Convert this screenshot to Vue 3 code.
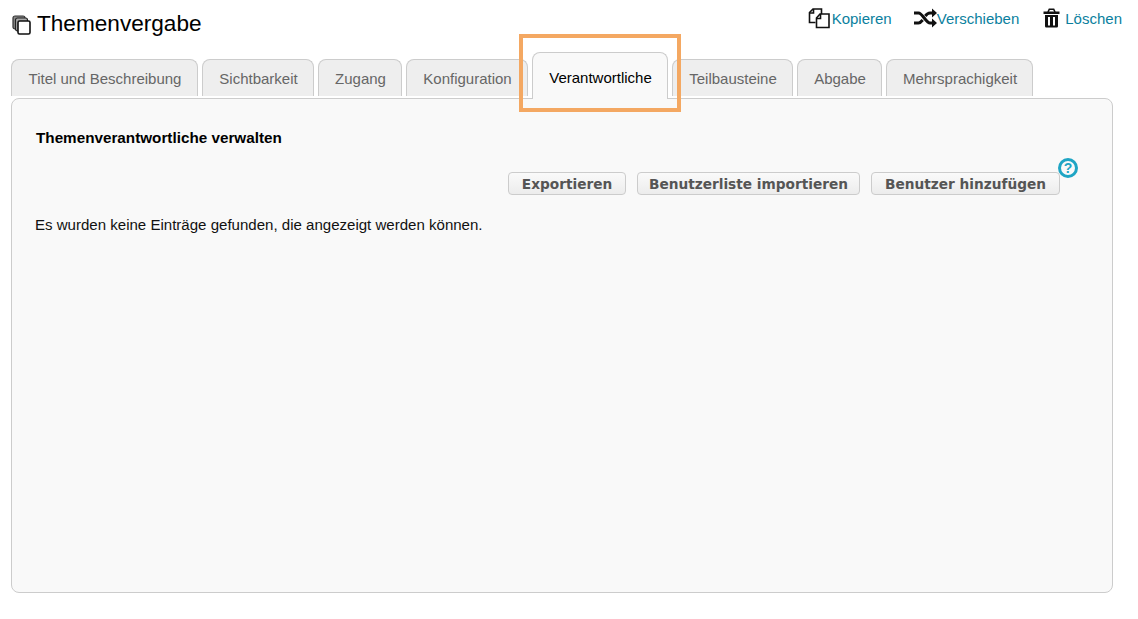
<script setup>
const tabs = [
  { label: 'Titel und Beschreibung', width: 187 },
  { label: 'Sichtbarkeit', width: 112 },
  { label: 'Zugang', width: 84 },
  { label: 'Konfiguration', width: 122 },
  { label: 'Verantwortliche', width: 136, active: true },
  { label: 'Teilbausteine', width: 121 },
  { label: 'Abgabe', width: 85 },
  { label: 'Mehrsprachigkeit', width: 147 }
]
const buttons = [
  { label: 'Exportieren', width: 118 },
  { label: 'Benutzerliste importieren', width: 223 },
  { label: 'Benutzer hinzufügen', width: 189 }
]
</script>

<template>
  <div class="page">
    <header class="head">
      <h1 class="title">
        <svg class="title-icon" width="19" height="20" viewBox="0 0 19 20">
          <rect x="1" y="1" width="12" height="13" rx="2" fill="#888" stroke="#333" stroke-width="1.2" />
          <rect x="3.5" y="3" width="12" height="13" rx="2" fill="#aaa" stroke="#222" stroke-width="1.2" />
          <rect x="6" y="6" width="12" height="13" rx="1.5" fill="#fff" stroke="#111" stroke-width="1.6" />
        </svg>
        Themenvergabe
      </h1>
      <nav class="actions">
        <a class="action">
          <svg width="24" height="21" viewBox="0 0 24 21" fill="none" stroke="#111" stroke-width="1.6">
            <path d="M7.500 14.500H1.500V4.500L5 1H13.500V6" fill="#fff" />
            <path d="M1.500 5H5.500V1" />
            <path d="M8.500 10L12 6H21V19.500H8.500Z" fill="#fff" />
            <path d="M8.500 10.500H12.500V6" />
          </svg>
          <span>Kopieren</span>
        </a>
        <a class="action move">
          <svg width="24" height="20" viewBox="0 0 24 20" fill="none">
            <path d="M1 5H5.5C9.5 5 13 15 17 15H20" stroke="#111" stroke-width="3" />
            <path d="M1 15H5.5C7 15 8.5 13.5 9.7 12M12.3 8C13.6 6.3 15 5 17 5H20" stroke="#111" stroke-width="3" />
            <path d="M19 0.5L24 5L19 9.5Z M19 10.5L24 15L19 19.5Z" fill="#111" />
          </svg>
          <span>Verschieben</span>
        </a>
        <a class="action trash">
          <svg width="17" height="20" viewBox="0 0 17 20">
            <path d="M5 4L6.300 1.200H10.700L12 4" fill="none" stroke="#111" stroke-width="1.600" />
            <path d="M0.500 3.500H16.500V6H0.500Z" fill="#111" />
            <path d="M2 7H15V18C15 19 14.300 19.500 13.500 19.500H3.500C2.700 19.500 2 19 2 18Z" fill="#111" />
            <path d="M6 9V17.500M11 9V17.500" stroke="#fff" stroke-width="2" />
          </svg>
          <span>Löschen</span>
        </a>
      </nav>
    </header>

    <div class="tabs">
      <div
        v-for="tab in tabs"
        :key="tab.label"
        class="tab"
        :class="{ active: tab.active }"
        :style="{ width: tab.width + 'px' }"
      >
        {{ tab.label }}
      </div>
    </div>

    <section class="panel">
      <h2 class="panel-title">Themenverantwortliche verwalten</h2>
      <div class="toolbar">
        <button
          v-for="b in buttons"
          :key="b.label"
          class="btn"
          type="button"
          :style="{ width: b.width + 'px' }"
        >{{ b.label }}</button>
        <span class="help">?</span>
      </div>
      <p class="empty">Es wurden keine Einträge gefunden, die angezeigt werden können.</p>
    </section>

    <div class="highlight"></div>
  </div>
</template>

<style scoped>
.page {
  position: relative;
  width: 1138px;
  height: 619px;
  box-sizing: border-box;
  padding: 0 25px 0 11px;
  font-family: "Liberation Sans", Arial, sans-serif;
  background: #fff;
  overflow: hidden;
}
.head {
  display: flex;
  justify-content: space-between;
  align-items: flex-start;
  height: 52px;
}
.title {
  display: flex;
  align-items: center;
  gap: 6px;
  margin: 9px 0 0;
  font-size: 22.6px;
  font-weight: 400;
  line-height: 29px;
  color: #000;
}
.title-icon {
  margin: 2px 0 0 1px;
}
.actions {
  display: flex;
  margin: 7px -9px 0 0;
}
.action {
  display: flex;
  align-items: center;
  height: 22px;
  margin-left: 21px;
  font-size: 15px;
  color: #0b7f9e;
}
.action svg {
  flex: none;
}
.trash {
  gap: 5px;
  margin-left: 24px;
}
.tabs {
  display: flex;
  align-items: flex-start;
  gap: 4px;
  height: 44px;
  position: relative;
  z-index: 1;
}
.tab {
  box-sizing: border-box;
  height: 37px;
  margin-top: 7px;
  padding: 10px 0 0 1px;
  border: 1px solid #ccc;
  border-bottom: 0;
  border-radius: 8px 8px 0 0;
  background: #eee;
  color: #666;
  font-size: 15px;
  line-height: 17px;
  text-align: center;
  white-space: nowrap;
}
.tab.active {
  height: 47px;
  margin-top: 0;
  padding-top: 16px;
  background: #f9f9f9;
  color: #000;
}
.panel {
  box-sizing: border-box;
  margin-top: 2px;
  height: 495px;
  padding: 29px 24px 0;
  border: 1px solid #ccc;
  border-radius: 8px;
  background: #f9f9f9;
}
.panel-title {
  margin: 0;
  font-size: 15.25px;
  line-height: 20px;
  font-weight: 700;
  color: #000;
}
.toolbar {
  position: relative;
  display: flex;
  justify-content: flex-end;
  gap: 11px;
  margin: 24px 28px 0 0;
}
.btn {
  box-sizing: border-box;
  height: 23px;
  padding: 1px 0 0;
  border: 1px solid #ccc;
  border-radius: 4px;
  background: linear-gradient(#fafafa, #ececec);
  color: #555;
  font-family: "DejaVu Sans", Verdana, sans-serif;
  font-size: 13.7px;
  font-weight: 700;
  line-height: 20px;
  white-space: nowrap;
}
.help {
  position: absolute;
  right: -18px;
  top: -14px;
  box-sizing: border-box;
  width: 20px;
  height: 20px;
  border: 3px solid #1fa5c4;
  border-radius: 50%;
  color: #1fa5c4;
  font-size: 14px;
  font-weight: 700;
  line-height: 14px;
  text-align: center;
}
.empty {
  margin: 20px 0 0 -1px;
  font-size: 15.05px;
  line-height: 20px;
  color: #111;
}
.highlight {
  position: absolute;
  left: 519px;
  top: 34px;
  width: 162px;
  height: 78px;
  box-sizing: border-box;
  border: 4px solid #f4a862;
  z-index: 2;
  pointer-events: none;
}
</style>
